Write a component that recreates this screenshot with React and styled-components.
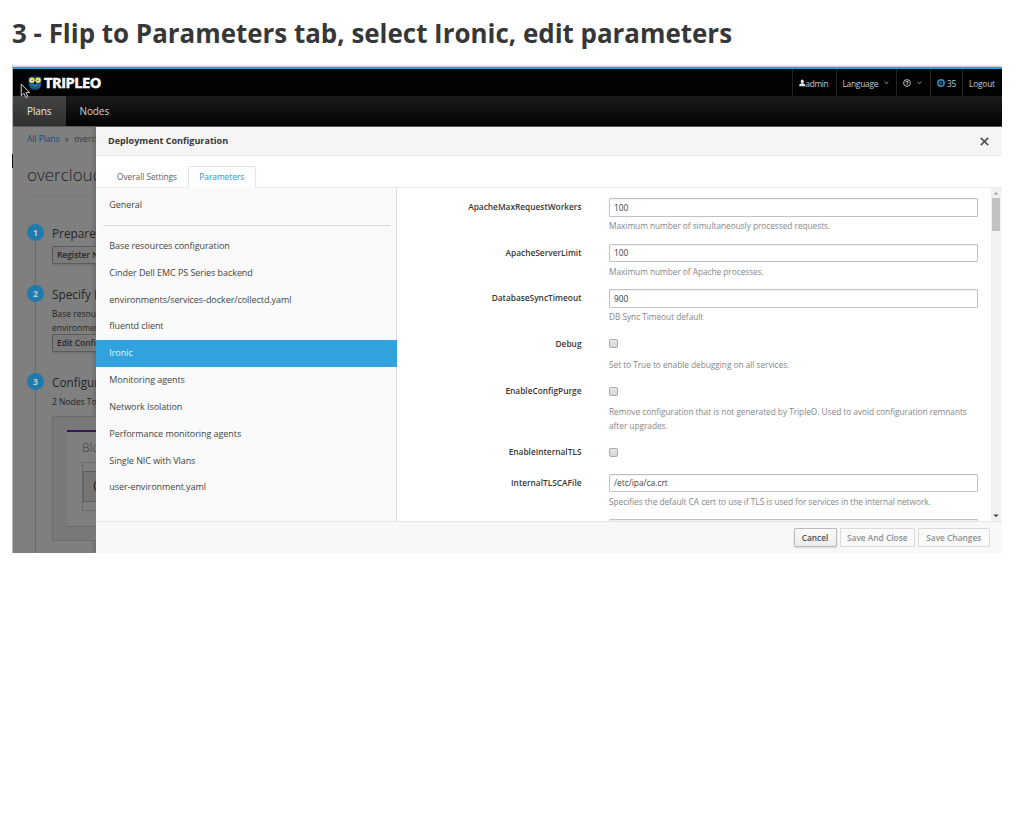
import React from "react";
import styled, { createGlobalStyle } from "styled-components";

const Global = createGlobalStyle`
  * { box-sizing: border-box; }
  body { margin: 0; background: #fff; font-family: "Open Sans", "Noto Sans", sans-serif; color: #363636; overflow: hidden; }
`;

const Slide = styled.main`
  width: 1024px;
  height: 828px;
  overflow: hidden;
  padding-left: 12px;
`;
const Title = styled.h1`
  margin: 0;
  height: 65px;
  font: 700 25.93px/67px "Open Sans", sans-serif;
  color: #363738;
  white-space: nowrap;
`;
const Window = styled.div`
  position: relative;
  width: 990px;
  height: 488px;
  border-left: 1px solid #b5b5b5;
  border-top: 1px solid #e8e8e8;
  overflow: hidden;
  display: flex;
  flex-direction: column;
`;
const Accent = styled.div`
  height: 3px;
  flex: none;
  background: #2b9fd9;
  border-top: 1px solid #cfd3d5;
`;
const TopBar = styled.header`
  height: 27px;
  flex: none;
  background: #020202;
  display: flex;
  justify-content: space-between;
`;
const Brand = styled.div`
  display: flex;
  align-items: center;
  padding-left: 15px;
  gap: 2px;
  color: #fff;
  font: 700 14.6px/27px "Open Sans", sans-serif;
  letter-spacing: -0.45px;
  -webkit-text-stroke: 0.5px #fff;
`;
const Utilities = styled.div`
  display: flex;
`;
const Utility = styled.div`
  width: ${(p) => p.$w}px;
  border-left: 1px solid #232323;
  display: flex;
  align-items: center;
  padding: 1px 0 0 ${(p) => p.$pad || 6}px;
  gap: ${(p) => p.$gap || 0}px;
  font-size: 8.34px;
  letter-spacing: ${(p) => p.$track || -0.18}px;
  color: #c8c8c8;
  white-space: nowrap;
`;
const Nav = styled.nav`
  height: 31px;
  flex: none;
  display: flex;
  background: linear-gradient(#1c1c1c, #020202);
  border-bottom: 1px solid #5a5a5a;
`;
const NavItem = styled.a`
  padding: 0 14px;
  line-height: 30px;
  font-size: 10px;
  letter-spacing: -0.1px;
  color: ${(p) => (p.$active ? "#e4e4e4" : "#cfcfcf")};
  background: ${(p) => (p.$active ? "linear-gradient(#444, #303030)" : "none")};
`;
const Body = styled.div`
  flex: 1;
  display: flex;
  min-height: 0;
`;
const Backdrop = styled.section`
  width: 83px;
  flex: none;
  overflow: hidden;
  background: #7f7f7f;
  color: #252525;
  white-space: nowrap;
  padding-left: 14px;
  box-shadow: inset -5px 0 5px -4px rgba(0, 0, 0, 0.22);
`;
const Crumbs = styled.div`
  height: 25px;
  line-height: 24px;
  font-size: 8.34px;
  display: flex;
  gap: 5.3px;
  color: #3a3a3a;
  a { color: #0b5078; }
`;
const PlanName = styled.h2`
  margin: 0;
  height: 44px;
  border-bottom: 1px solid #777;
  font: 300 17px/45px "Open Sans", sans-serif;
  color: #222;
`;
const Steps = styled.div`
  padding-top: 28px;
  width: 300px;
`;
const Step = styled.div`
  display: flex;
  height: ${(p) => p.$h}px;
`;
const Rail = styled.div`
  width: 17px;
  flex: none;
  display: flex;
  flex-direction: column;
  align-items: center;
  &::after { content: ""; flex: 1; width: 1px; background: #686868; }
`;
const Dot = styled.div`
  width: 17px;
  height: 17px;
  border-radius: 50%;
  background: #1f7bae;
  color: #c3ccd1;
  text-align: center;
  font: 700 8.5px/17px "Open Sans", sans-serif;
`;
const StepBody = styled.div`
  padding-left: 8px;
  flex: 1;
`;
const StepTitle = styled.h3`
  margin: 0 0 3px;
  font: 400 11.8px/19px "Open Sans", sans-serif;
`;
const StepText = styled.p`
  margin: 0;
  font-size: 8.5px;
  line-height: 13.6px;
`;
const DimButton = styled.button`
  display: block;
  margin: 0;
  width: 90px;
  height: 18px;
  padding: 0 4px;
  text-align: left;
  border: 1px solid #5b5b5b;
  border-radius: 1px;
  background: #7b7b7b;
  color: #272727;
  box-shadow: 0 1px 2px rgba(0, 0, 0, 0.15);
  font: 600 8.4px/16px "Open Sans", sans-serif;
`;
const RoleArea = styled.div`
  margin-top: 7px;
  height: 125px;
  border: 1px solid #6b6b6b;
  background: #787878;
  padding: 13px 0 0 14px;
`;
const RoleCard = styled.div`
  height: 97px;
  background: #7f7f7f;
  border-top: 2px solid #35145c;
  border-bottom: 1px solid #6b6b6b;
  padding: 7px 0 0 15px;
`;
const RoleName = styled.div`
  font: 300 12px/18px "Open Sans", sans-serif;
  color: #3c3c3c;
`;
const Spinner = styled.div`
  margin-top: 5px;
  height: 49px;
  border: 1px solid #6a6a6a;
  border-radius: 1px;
  padding: 8px 0;
`;
const SpinnerValue = styled.div`
  height: 31px;
  border: 1px solid #606060;
  border-right: none;
  background: #757575;
  padding-left: 9px;
  font: 400 15px/27px "Open Sans", sans-serif;
`;

const Modal = styled.section`
  flex: 1;
  min-width: 0;
  display: flex;
  flex-direction: column;
  background: #fff;
`;
const ModalHeader = styled.header`
  height: 29px;
  flex: none;
  display: flex;
  align-items: center;
  justify-content: space-between;
  padding: 0 13px 0 12px;
  background: #f5f5f5;
  border-bottom: 1px solid #efefef;
  font-size: 9.05px;
  line-height: 26px;
  font-weight: 700;
  > span { padding-bottom: 1px; }
`;
const Tabs = styled.div`
  height: 32px;
  flex: none;
  display: flex;
  align-items: flex-end;
  padding-left: 10px;
  border-bottom: 1px solid #ececec;
`;
const Tab = styled.a`
  height: 22px;
  margin-bottom: -1px;
  width: ${(p) => p.$w}px;
  text-align: center;
  font-size: 8.34px;
  letter-spacing: -0.03px;
  line-height: 20px;
  border: 1px solid ${(p) => (p.$active ? "#e6e6e6" : "transparent")};
  border-bottom-color: ${(p) => (p.$active ? "#fff" : "transparent")};
  color: ${(p) => (p.$active ? "#1f93cf" : "#5d5d5d")};
`;
const Content = styled.div`
  flex: 1;
  min-height: 0;
  display: flex;
`;
const Sidebar = styled.ul`
  width: 301px;
  flex: none;
  margin: 0;
  padding: 4px 0 0;
  list-style: none;
  background: #fafafa;
  border-right: 1px solid #dcdcdc;
`;
const Group = styled.li`
  height: 26.85px;
  margin-right: ${(p) => (p.$active ? -1 : 0)}px;
  padding-left: 13.3px;
  font-size: 9.03px;
  letter-spacing: -0.07px;
  line-height: 26.85px;
  color: ${(p) => (p.$active ? "#e9f5fb" : "#444")};
  background: ${(p) => (p.$active ? "#31a2dd" : "none")};
`;
const Divider = styled.li`
  height: 1px;
  margin: 6px 6px 7px 7px;
  background: #d6d6d6;
`;
const Form = styled.form`
  flex: 1;
  min-width: 0;
  overflow: hidden;
  padding-top: 10px;
`;
const Field = styled.div`
  display: flex;
  height: ${(p) => p.$h}px;
`;
const Label = styled.label`
  width: 184.5px;
  flex: none;
  text-align: right;
  font-size: 8.34px;
  font-weight: 600;
  line-height: 18px;
  color: #363636;
`;
const Control = styled.div`
  margin-left: 27.5px;
  width: 369px;
`;
const Input = styled.input`
  display: block;
  width: 369px;
  height: 18.5px;
  padding: 0 4px;
  border: 1px solid #c2c2c2;
  border-radius: 1px;
  background: #fff;
  color: #3c3c3c;
  font: 8.34px "Open Sans", sans-serif;
  box-shadow: inset 0 1px 1px rgba(0, 0, 0, 0.06);
`;
const Check = styled.span`
  display: block;
  width: 9px;
  height: 9px;
  margin: 4.5px 0 0;
  border: 1px solid #aaa;
  border-radius: 2px;
  background: linear-gradient(#e6e6e6, #d8d8d8);
`;
const Help = styled.p`
  margin: ${(p) => (p.$check ? 9.5 : 2.5)}px 0 0;
  font-size: 8.34px;
  letter-spacing: -0.045px;
  line-height: 14px;
  color: #868686;
`;
const Scrollbar = styled.div`
  width: 11px;
  flex: none;
  background: #f1f1f1;
  display: flex;
  flex-direction: column;
  align-items: center;
  border-right: 1px solid #fafafa;
`;
const Thumb = styled.div`
  width: 8px;
  height: 33px;
  background: #c1c1c1;
  margin-bottom: auto;
`;
const Arrow = styled.svg`
  display: block;
  width: 10px;
  height: 10px;
`;
const Footer = styled.footer`
  height: 32px;
  flex: none;
  display: flex;
  gap: 3px;
  align-items: center;
  justify-content: flex-end;
  padding-right: 12.5px;
  background: #f8f8f8;
  border-top: 1px solid #e6e6e6;
`;
const Button = styled.button`
  width: ${(p) => p.$w}px;
  height: 18.5px;
  padding: 0;
  border: 1px solid ${(p) => (p.$muted ? "#dadada" : "#b9b9b9")};
  border-radius: 1px;
  background: ${(p) => (p.$muted ? "#fafafa" : "linear-gradient(#fafafa, #ececec)")};
  box-shadow: ${(p) => (p.$muted ? "none" : "0 1px 2px rgba(0,0,0,.14)")};
  color: ${(p) => (p.$muted ? "#8f8f8f" : "#4b4f54")};
  font: 600 8.34px/16px "Open Sans", sans-serif;
  white-space: nowrap;
`;
const Pointer = styled.svg`
  position: absolute;
  left: 7px;
  top: 17px;
  width: 11px;
  height: 16px;
`;
const Notch = styled.div`
  position: absolute;
  left: 12px;
  top: 154px;
  width: 1px;
  height: 14px;
  background: #111;
`;

const Owl = () => (
  <svg width="14" height="14" viewBox="0 0 14 14">
    <path d="M0.4 1.4 L2.5 0.6 H11.5 L13.6 1.4 V8 Q13 13.6 7 13.9 Q1 13.6 0.4 8Z" fill="#1a4a78" />
    <path d="M1.8 8.5 Q4 7.5 7 9 Q10 7.5 12.2 8.5 Q11.8 12.9 7 13.1 Q2.2 12.9 1.8 8.5Z" fill="#2d79b5" />
    <path d="M3 9.8 L5 10.6 M11 9.8 L9 10.6 M4.8 12 H9.2" stroke="#0b2036" strokeWidth="0.9" />
    <circle cx="3.9" cy="4.2" r="2.7" fill="#f3e04a" />
    <circle cx="10.1" cy="4.2" r="2.7" fill="#f3e04a" />
    <circle cx="3.9" cy="4.2" r="1.4" fill="#fffbd8" />
    <circle cx="10.1" cy="4.2" r="1.4" fill="#fffbd8" />
    <circle cx="4.1" cy="4.2" r="0.8" fill="#27303a" />
    <circle cx="9.9" cy="4.2" r="0.8" fill="#27303a" />
    <path d="M6 6 L7 9 L8 6Z" fill="#0a0f18" />
  </svg>
);
const User = () => (
  <svg width="6.5" height="8" viewBox="0 0 7 8" fill="#dedede">
    <ellipse cx="3.5" cy="2.4" rx="1.7" ry="2.2" />
    <path d="M0.3 7.5 V6 Q0.4 5.2 1.5 4.9 L2.6 4.4 H4.4 L5.5 4.9 Q6.6 5.2 6.7 6 V7.5Z" />
  </svg>
);
const Chevron = () => (
  <svg width="5" height="4" viewBox="0 0 5 4">
    <path d="M0.6 0.8 L2.5 2.7 L4.4 0.8" fill="none" stroke="#b5b5b5" strokeWidth="0.9" />
  </svg>
);
const HelpIcon = () => (
  <svg width="8" height="8" viewBox="0 0 8 8" fill="none" stroke="#d0d0d0">
    <circle cx="4" cy="4" r="3.4" strokeWidth="0.9" />
    <path d="M2.8 3.2 Q2.9 2.2 4 2.2 Q5.3 2.3 5.2 3.2 Q5.1 3.8 4 4.2 V4.8 M4 5.3 V6.2" strokeWidth="1" />
  </svg>
);
const Play = () => (
  <svg width="8" height="8" viewBox="0 0 8 8">
    <circle cx="4" cy="4" r="3.1" fill="none" stroke="#2f86b8" strokeWidth="1.7" />
    <path d="M3.2 2.5 L5.5 4 L3.2 5.5Z" fill="#2f86b8" />
  </svg>
);

const groups = [
  "Base resources configuration",
  "Cinder Dell EMC PS Series backend",
  "environments/services-docker/collectd.yaml",
  "fluentd client",
  "Ironic",
  "Monitoring agents",
  "Network Isolation",
  "Performance monitoring agents",
  "Single NIC with Vlans",
  "user-environment.yaml",
];
const fields = [
  { name: "ApacheMaxRequestWorkers", value: "100", help: "Maximum number of simultaneously processed requests.", h: 45.5 },
  { name: "ApacheServerLimit", value: "100", help: "Maximum number of Apache processes.", h: 45.5 },
  { name: "DatabaseSyncTimeout", value: "900", help: "DB Sync Timeout default", h: 45.5 },
  { name: "Debug", check: true, help: "Set to True to enable debugging on all services.", h: 47.5 },
  { name: "EnableConfigPurge", check: true, help: "Remove configuration that is not generated by TripleO. Used to avoid configuration remnants after upgrades.", h: 61 },
  { name: "EnableInternalTLS", check: true, h: 30.5 },
  { name: "InternalTLSCAFile", value: "/etc/ipa/ca.crt", help: "Specifies the default CA cert to use if TLS is used for services in the internal network.", h: 45.5 },
  { name: "", value: "", h: 45.5 },
];

export default function App() {
  return (
    <Slide>
      <Global />
      <Title>3 - Flip to Parameters tab, select Ironic, edit parameters</Title>
      <Window>
        <Accent />
        <TopBar>
          <Brand><Owl />TRIPLEO</Brand>
          <Utilities>
            <Utility $w={43.5} $track={-0.4}><User />admin</Utility>
            <Utility $w={60.5} $gap={6} $track={-0.24}>Language <Chevron /></Utility>
            <Utility $w={34} $gap={6}><HelpIcon /><Chevron /></Utility>
            <Utility $w={32} $gap={2}><Play />35</Utility>
            <Utility $w={40}>Logout</Utility>
          </Utilities>
        </TopBar>
        <Nav>
          <NavItem $active>Plans</NavItem>
          <NavItem>Nodes</NavItem>
        </Nav>
        <Body>
          <Backdrop>
            <Crumbs><a>All Plans</a><span>»</span><span>overcloud</span></Crumbs>
            <PlanName>overcloud</PlanName>
            <Steps>
              <Step $h={61}>
                <Rail><Dot>1</Dot></Rail>
                <StepBody>
                  <StepTitle>Prepare Hardware</StepTitle>
                  <DimButton>Register Nodes</DimButton>
                </StepBody>
              </Step>
              <Step $h={88}>
                <Rail><Dot>2</Dot></Rail>
                <StepBody>
                  <StepTitle>Specify Deployment</StepTitle>
                  <StepText>Base resources<br />environments</StepText>
                  <DimButton>Edit Configuration</DimButton>
                </StepBody>
              </Step>
              <Step $h={190}>
                <Rail><Dot>3</Dot></Rail>
                <StepBody>
                  <StepTitle>Configure Roles</StepTitle>
                  <StepText>2 Nodes Total</StepText>
                  <RoleArea>
                    <RoleCard>
                      <RoleName>Block Storage</RoleName>
                      <Spinner><SpinnerValue>0</SpinnerValue></Spinner>
                    </RoleCard>
                  </RoleArea>
                </StepBody>
              </Step>
            </Steps>
          </Backdrop>
          <Modal>
            <ModalHeader>
              <span>Deployment Configuration</span>
              <svg width="9" height="9" viewBox="0 0 9 9">
                <path d="M0.8 0.8 L8.2 8.2 M8.2 0.8 L0.8 8.2" stroke="#555" strokeWidth="1.7" />
              </svg>
            </ModalHeader>
            <Tabs>
              <Tab $w={82}>Overall Settings</Tab>
              <Tab $w={67.5} $active>Parameters</Tab>
            </Tabs>
            <Content>
              <Sidebar>
                <Group>General</Group>
                <Divider />
                {groups.map((g) => <Group key={g} $active={g === "Ironic"}>{g}</Group>)}
              </Sidebar>
              <Form>
                {fields.map((f, i) => (
                  <Field key={i} $h={f.h}>
                    <Label>{f.name}</Label>
                    <Control>
                      {f.check ? <Check /> : <Input defaultValue={f.value} />}
                      {f.help && <Help $check={f.check}>{f.help}</Help>}
                    </Control>
                  </Field>
                ))}
              </Form>
              <Scrollbar>
                <Arrow viewBox="0 0 10 10"><path d="M2.5 6.5 L5 4 L7.5 6.5Z" fill="#a3a3a3" /></Arrow>
                <Thumb />
                <Arrow viewBox="0 0 10 10"><path d="M2.3 3.5 L5 6.2 L7.7 3.5Z" fill="#444" /></Arrow>
              </Scrollbar>
            </Content>
            <Footer>
              <Button $w={43}>Cancel</Button>
              <Button $w={75.5} $muted>Save And Close</Button>
              <Button $w={71.5} $muted>Save Changes</Button>
            </Footer>
          </Modal>
        </Body>
        <Pointer viewBox="0 0 10 15">
          <path d="M1 1 V12 L3.6 9.7 L5.3 13.6 L7.2 12.8 L5.6 9 H9Z" fill="#111" stroke="#d8d8d8" strokeWidth="0.9" />
        </Pointer>
      </Window>
      <Notch />
    </Slide>
  );
}
